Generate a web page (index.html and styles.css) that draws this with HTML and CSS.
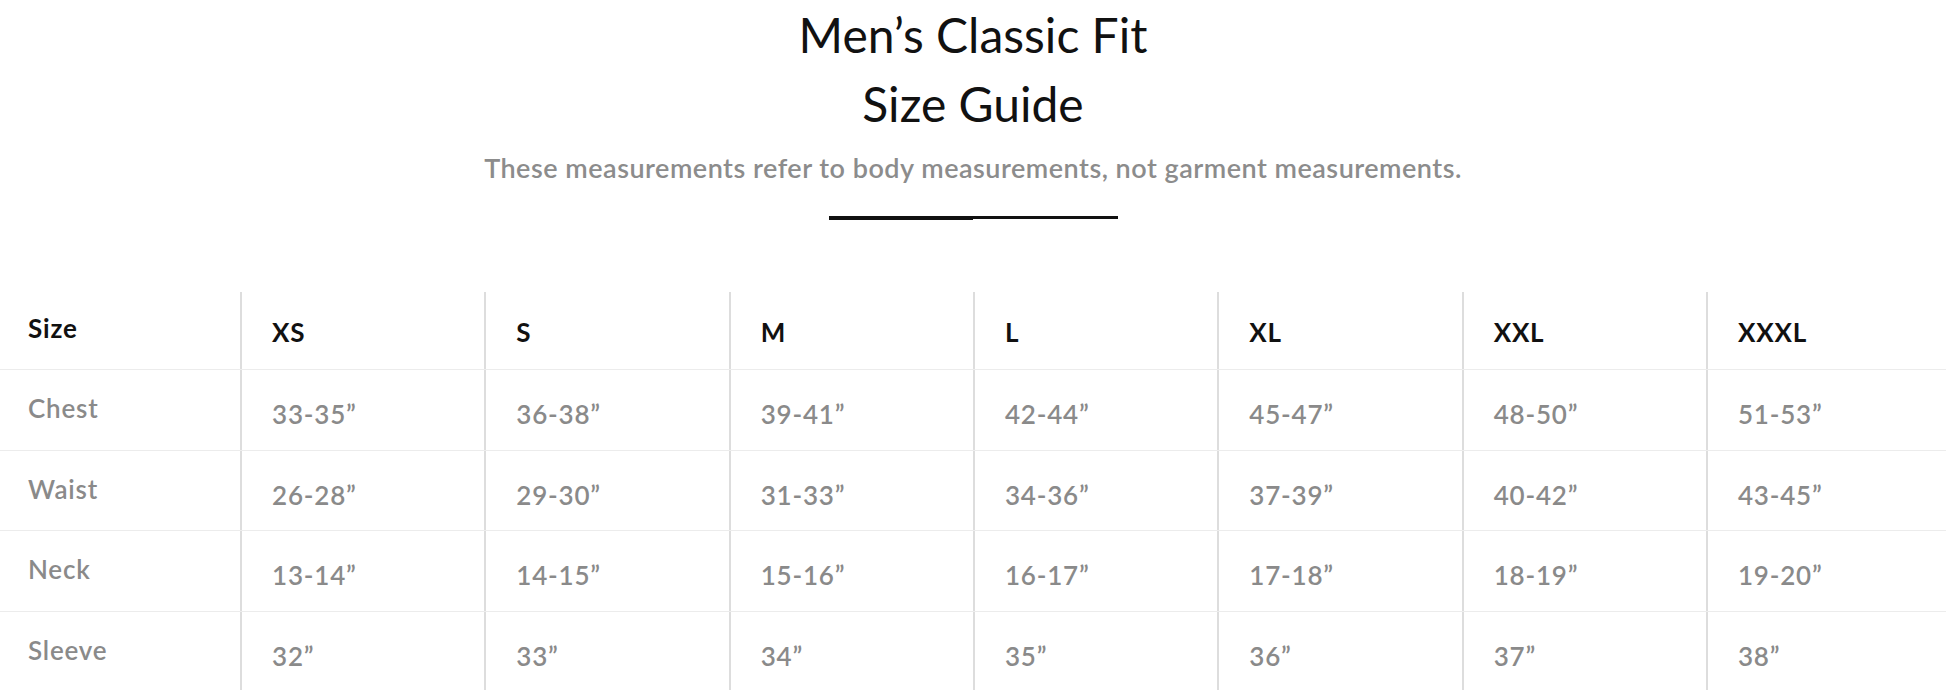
FILE: index.html
```html
<!DOCTYPE html>
<html lang="en">
<head>
<meta charset="utf-8">
<title>Men's Classic Fit Size Guide</title>
<link rel="stylesheet" href="styles.css">
</head>
<body>
<header class="intro">
  <h1 class="title">Men’s Classic Fit<br>Size Guide</h1>
  <p class="subtitle">These measurements refer to body measurements, not garment measurements.</p>
  <div class="rule"><span class="rule-a"></span><span class="rule-b"></span></div>
</header>
<section class="chart">
  <div class="row head">
    <div class="cell label">Size</div>
    <div class="cell">XS</div>
    <div class="cell">S</div>
    <div class="cell">M</div>
    <div class="cell">L</div>
    <div class="cell">XL</div>
    <div class="cell">XXL</div>
    <div class="cell">XXXL</div>
  </div>
  <div class="row">
    <div class="cell label">Chest</div>
    <div class="cell">33-35”</div>
    <div class="cell">36-38”</div>
    <div class="cell">39-41”</div>
    <div class="cell">42-44”</div>
    <div class="cell">45-47”</div>
    <div class="cell">48-50”</div>
    <div class="cell">51-53”</div>
  </div>
  <div class="row">
    <div class="cell label">Waist</div>
    <div class="cell">26-28”</div>
    <div class="cell">29-30”</div>
    <div class="cell">31-33”</div>
    <div class="cell">34-36”</div>
    <div class="cell">37-39”</div>
    <div class="cell">40-42”</div>
    <div class="cell">43-45”</div>
  </div>
  <div class="row">
    <div class="cell label">Neck</div>
    <div class="cell">13-14”</div>
    <div class="cell">14-15”</div>
    <div class="cell">15-16”</div>
    <div class="cell">16-17”</div>
    <div class="cell">17-18”</div>
    <div class="cell">18-19”</div>
    <div class="cell">19-20”</div>
  </div>
  <div class="row">
    <div class="cell label">Sleeve</div>
    <div class="cell">32”</div>
    <div class="cell">33”</div>
    <div class="cell">34”</div>
    <div class="cell">35”</div>
    <div class="cell">36”</div>
    <div class="cell">37”</div>
    <div class="cell">38”</div>
  </div>
</section>
</body>
</html>
```

FILE: styles.css
```css
html, body {
  margin: 0;
  padding: 0;
  background: #ffffff;
}
body {
  font-family: Lato, "Open Sans", "DejaVu Sans", sans-serif;
  color: #111111;
  overflow: hidden;
}
.intro {
  display: flex;
  flex-direction: column;
  align-items: center;
}
.title {
  margin: 0;
  font-size: 48px;
  line-height: 69px;
  font-weight: 400;
  text-align: center;
  color: #111111;
}
.subtitle {
  margin: 15px 0 0;
  font-size: 27px;
  line-height: 30px;
  font-weight: 600;
  letter-spacing: 0.5px;
  color: #8c8c8c;
}
.rule {
  display: flex;
  align-items: flex-start;
  margin-top: 33px;
  width: 289px;
}
.rule-a {
  flex: 1;
  height: 4px;
  background: #111111;
}
.rule-b {
  flex: 1;
  height: 3px;
  background: #111111;
}
.chart {
  margin-top: 72px;
}
.row {
  display: grid;
  grid-template-columns: 240px repeat(6, 1fr) 240px;
  height: 80.67px;
  border-top: 1px solid #ececec;
  box-sizing: border-box;
}
.row.head {
  height: 77px;
  border-top: none;
}
.cell {
  box-sizing: border-box;
  padding: 29px 0 0 30px;
  font-size: 26px;
  line-height: 30px;
  font-weight: 600;
  letter-spacing: 0.8px;
  color: #8a8a8a;
}
.cell + .cell {
  border-left: 2px solid #dddddd;
}
.cell.label {
  padding: 23px 0 0 28px;
}
.head .cell {
  padding-top: 25px;
  font-weight: 700;
  color: #111111;
}
.head .cell.label {
  padding-top: 21px;
}
```
